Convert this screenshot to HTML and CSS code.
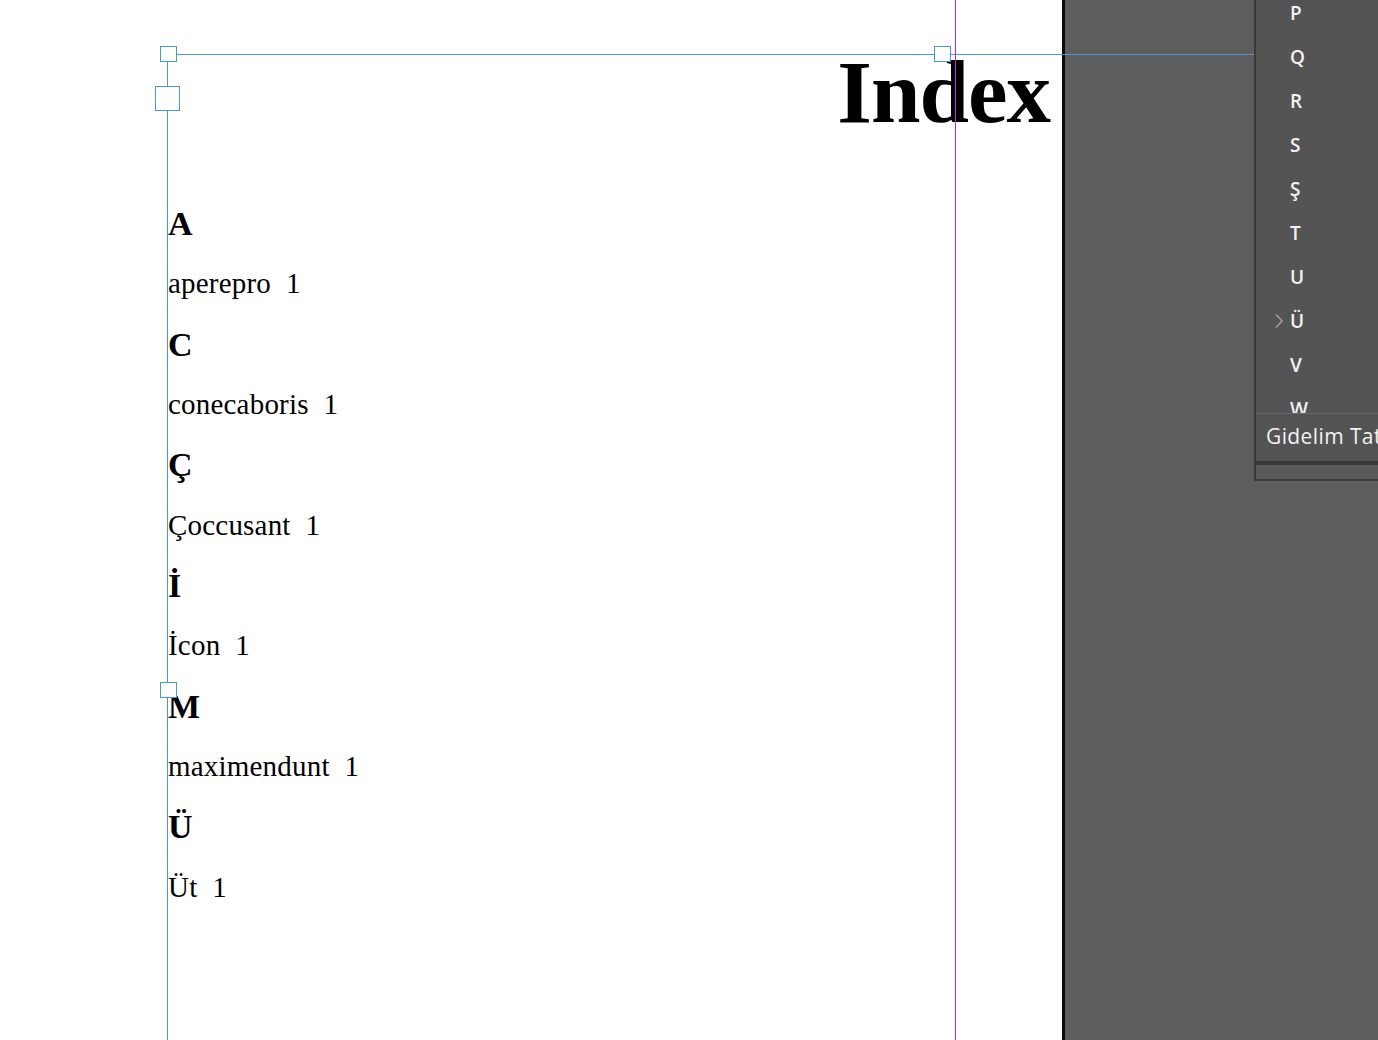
FILE: index.html
```html
<!DOCTYPE html>
<html lang="tr">
<head>
<meta charset="utf-8">
<title>Index</title>
<link rel="stylesheet" href="styles.css">
</head>
<body>
<div class="workspace">
  <main class="page">
    <div class="frame">
      <h1 class="title">Index</h1>
      <div class="entries">
        <div class="head">A</div>
        <div class="entry">aperepro&nbsp; 1</div>
        <div class="head">C</div>
        <div class="entry">conecaboris&nbsp; 1</div>
        <div class="head">Ç</div>
        <div class="entry">Çoccusant&nbsp; 1</div>
        <div class="head">İ</div>
        <div class="entry">İcon&nbsp; 1</div>
        <div class="head">M</div>
        <div class="entry">maximendunt&nbsp; 1</div>
        <div class="head">Ü</div>
        <div class="entry">Üt&nbsp; 1</div>
      </div>
    </div>
  </main>
  <div class="spine"></div>
  <div class="pasteboard"></div>

  <div class="guide-h"></div>
  <div class="guide-v"></div>
  <div class="margin-v"></div>
  <div class="handle h1"></div>
  <div class="handle h2"></div>
  <div class="handle big"></div>
  <div class="handle h3"></div>

  <div class="menu">
    <ul class="menu-list">
      <li>P</li>
      <li>Q</li>
      <li>R</li>
      <li>S</li>
      <li>Ş</li>
      <li>T</li>
      <li>U</li>
      <li class="current"><svg class="chev" width="10" height="16" viewBox="0 0 10 16"><path d="M2 1.5 L8 8 L2 14.5" fill="none" stroke="#a0a0a0" stroke-width="1.5"/></svg>Ü</li>
      <li>V</li>
      <li>W</li>
    </ul>
    <div class="menu-foot">Gidelim Tat</div>
    <div class="menu-band"></div>
    <div class="menu-tail"></div>
  </div>
</div>
</body>
</html>
```
FILE: styles.css
```css
html, body {
  margin: 0;
  padding: 0;
  height: 100%;
  overflow: hidden;
}
body {
  font-family: "Liberation Serif", "Times New Roman", serif;
  color: #000;
}
.workspace {
  position: relative;
  display: flex;
  width: 1378px;
  height: 1040px;
  overflow: hidden;
}
.page {
  width: 1062px;
  flex: 0 0 1062px;
  background: #fff;
  padding-top: 48px;
  box-sizing: border-box;
}
.spine {
  flex: 0 0 3px;
  background: #0a0a0a;
}
.pasteboard {
  flex: 1;
  background: #5d5d5d;
}
.frame {
  margin-left: 168px;
  width: 882px;
}
.title {
  margin: 0;
  font-size: 89px;
  line-height: 88px;
  height: 88px;
  font-weight: 700;
  text-align: right;
  letter-spacing: -1px;
}
.entries {
  margin-top: 58px;
  display: flex;
  flex-direction: column;
}
.head {
  height: 60.33px;
  line-height: 60.33px;
  font-size: 34px;
  font-weight: 700;
}
.entry {
  height: 60.33px;
  line-height: 58px;
  font-size: 29px;
  letter-spacing: 0.2px;
}
.guide-h {
  position: absolute;
  left: 168px;
  top: 54px;
  width: 1086px;
  height: 1px;
  background: #4a97d8;
}
.guide-v {
  position: absolute;
  left: 167px;
  top: 54px;
  width: 1px;
  height: 986px;
  background: #4a97d8;
}
.margin-v {
  position: absolute;
  left: 955px;
  top: 0;
  width: 1px;
  height: 1040px;
  background: #b02ee0;
}
.handle {
  position: absolute;
  box-sizing: border-box;
  background: #fff;
  border: 1.5px solid #4a97d8;
  width: 17px;
  height: 16px;
}
.h1 { left: 160px; top: 46px; }
.h2 { left: 934px; top: 46px; }
.h3 { left: 160px; top: 682px; }
.big { left: 155px; top: 86px; width: 25px; height: 25px; }

.menu {
  position: absolute;
  left: 1254px;
  top: -2px;
  width: 200px;
  height: 483px;
  box-sizing: border-box;
  border: 2px solid #3b3b3b;
  background: #585858;
  display: flex;
  flex-direction: column;
  font-family: "Open Sans", "DejaVu Sans", sans-serif;
  color: #f2f2f2;
}
.menu-list {
  list-style: none;
  margin: 0;
  padding: 0;
  height: 414px;
  flex: 0 0 414px;
  overflow: hidden;
  background: #545454;
  border-bottom: 1px solid #666;
  box-sizing: border-box;
}
.menu-list li {
  position: relative;
  height: 44px;
  line-height: 44px;
  font-size: 19px;
  font-weight: 600;
  padding-left: 34px;
}
.menu-list li:first-child {
  margin-top: -9px;
}
.chev {
  position: absolute;
  left: 18px;
  top: 14px;
}
.menu-foot {
  flex: 0 0 47px;
  height: 47px;
  line-height: 44px;
  font-size: 21px;
  letter-spacing: 0.4px;
  padding-left: 10px;
  background: #545454;
  white-space: nowrap;
  overflow: hidden;
}
.menu-band {
  flex: 0 0 4px;
  background: #3a3a3a;
}
.menu-tail {
  flex: 1;
  background: #5a5a5a;
}
```
